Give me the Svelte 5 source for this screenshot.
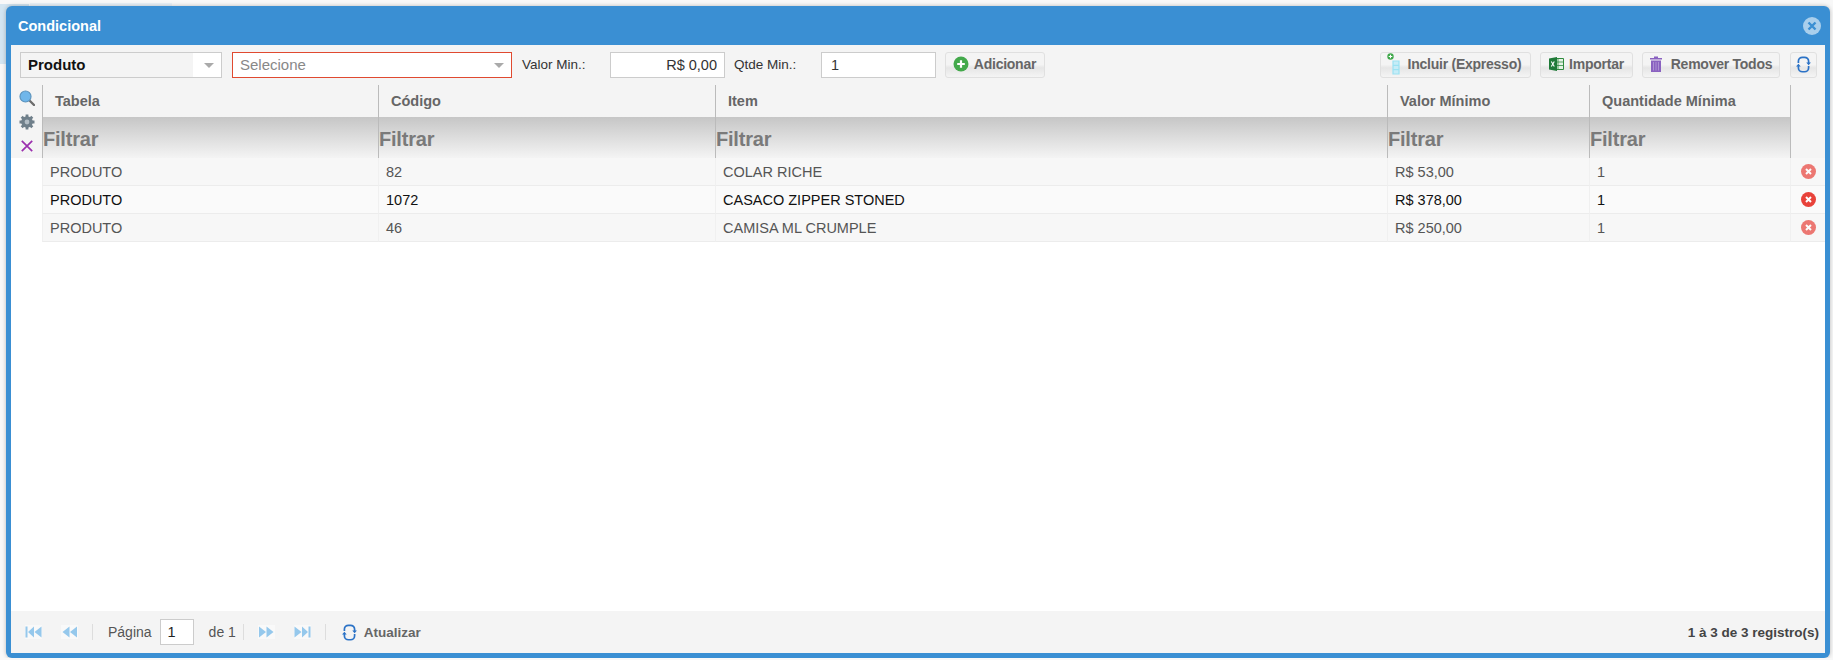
<script lang="ts">
  const rows = [
    { tabela: 'PRODUTO', codigo: '82', item: 'COLAR RICHE', valor: 'R$ 53,00', qtde: '1' },
    { tabela: 'PRODUTO', codigo: '1072', item: 'CASACO ZIPPER STONED', valor: 'R$ 378,00', qtde: '1', hover: true },
    { tabela: 'PRODUTO', codigo: '46', item: 'CAMISA ML CRUMPLE', valor: 'R$ 250,00', qtde: '1' },
  ];
  const columns = ['Tabela', 'Código', 'Item', 'Valor Mínimo', 'Quantidade Mínima'];
</script>

{#snippet refresh(size)}
  <svg width={size} height={size} viewBox="0 0 16 16" fill="none" stroke="#2b72c6" stroke-width="1.6">
    <path d="M3.2 6.500V5A3.800 3.800 0 0 1 7 1.200H9A3.800 3.800 0 0 1 12.800 5V6.500" />
    <path d="M12.800 9.500V11A3.800 3.800 0 0 1 9 14.800H7A3.800 3.800 0 0 1 3.200 11V9.500" />
    <path d="M10.600 6.200H15L12.800 8.600Z M1 9.800H5.400L3.200 7.400Z" fill="#2b72c6" stroke="none" />
  </svg>
{/snippet}

<div class="window">
  <header class="title">
    <span>Condicional</span>
    <svg class="close" width="18" height="18" viewBox="0 0 18 18">
      <circle cx="9" cy="9" r="9" fill="#a9cfec" />
      <path d="M5.5 5.5L12.5 12.5M12.5 5.5L5.5 12.5" stroke="#3a8fd3" stroke-width="2.4" />
    </svg>
  </header>

  <div class="content">
    <div class="toolbar">
      <div class="select first">
        <span class="value">Produto</span>
        <span class="arrow"></span>
      </div>
      <div class="select second">
        <span class="placeholder">Selecione</span>
        <span class="arrow"></span>
      </div>
      <span class="label valor">Valor Min.:</span>
      <input class="field money" value="R$ 0,00" />
      <span class="label qtde">Qtde Min.:</span>
      <input class="field" value="1" />
      <button class="btn add" type="button">
        <svg width="16" height="16" viewBox="0 0 16 16">
          <circle cx="8" cy="8" r="7.5" fill="#43a94b" />
          <path d="M8 4.2V11.8M4.2 8H11.8" stroke="#fff" stroke-width="2.2" />
        </svg>
        Adicionar
      </button>
      <div class="spacer"></div>
      <button class="btn express" type="button">
        <svg width="13" height="22" viewBox="0 0 13 22">
          <path d="M6 8H12V21H6Z M6 12.3H12 M6 16.6H12" fill="#c6ecf7" stroke="#9be2f2" stroke-width="1.2" />
          <circle cx="3.500" cy="3.500" r="3.200" fill="#3fa84a" />
          <path d="M1.700 3.500H5.300M3.500 1.700V5.300" stroke="#fff" stroke-width="1.100" />
        </svg>
        Incluir (Expresso)
      </button>
      <button class="btn import" type="button">
        <svg width="15" height="14" viewBox="0 0 15 14">
          <path d="M6 1.5H14.5V12.5H6Z" fill="#e4f2e4" stroke="#2f8a3d" />
          <path d="M9 2V12M6 5H14.500M6 8.500H14.500" stroke="#2f8a3d" stroke-width="0.8" />
          <path d="M0 1.500L8 0V14L0 12.500Z" fill="#1f7a38" />
          <path d="M2.300 4.500L5.300 9.500M5.300 4.500L2.300 9.500" stroke="#fff" stroke-width="1.100" />
        </svg>
        Importar
      </button>
      <button class="btn remove" type="button">
        <svg width="12" height="16" viewBox="0 0 12 16">
          <path d="M4 0.500H8V2H12V3.500H0V2H4Z" fill="#8a62c0" />
          <path d="M1 4.500H11V16H1Z" fill="#8a62c0" />
          <path d="M3.500 6V14.500M6 6V14.500M8.500 6V14.500" stroke="#b59ad8" stroke-width="0.800" />
        </svg>
        Remover Todos
      </button>
      <button class="btn reload" type="button">{@render refresh(17)}</button>
    </div>

    <div class="main">
      <div class="side">
        <svg width="16" height="16" viewBox="0 0 16 16">
          <path d="M10 10L15 15" stroke="#6d6d6d" stroke-width="2.400" stroke-linecap="round" />
          <circle cx="6.500" cy="6.500" r="5.500" fill="#6fb6ea" stroke="#5d94bd" stroke-width="1.200" />
        </svg>
        <svg class="gear" width="16" height="16" viewBox="0 0 16 16">
          <path d="M8 0.500V15.500M0.500 8H15.500M2.700 2.700L13.300 13.300M13.300 2.700L2.700 13.300" stroke="#6f7f8a" stroke-width="2.800" />
          <circle cx="8" cy="8" r="5.800" fill="#6f7f8a" />
          <circle cx="8" cy="8" r="2.400" fill="#b3bec6" />
        </svg>
        <svg class="clear" width="12" height="12" viewBox="0 0 12 12">
          <path d="M0.800 0.800L11.200 11.200M11.200 0.800L0.800 11.200" stroke="#9b2fae" stroke-width="1.700" />
        </svg>
      </div>

      <table class="grid">
        <colgroup>
          <col class="c1" /><col class="c2" /><col class="c3" /><col class="c4" /><col class="c5" /><col class="c6" />
        </colgroup>
        <thead>
          <tr class="heads">
            {#each columns as c}<th>{c}</th>{/each}
            <th></th>
          </tr>
          <tr class="filters">
            {#each columns as c}<td>Filtrar</td>{/each}
            <td class="blank"></td>
          </tr>
        </thead>
        <tbody>
          {#each rows as r}
            <tr class:hover={r.hover}>
              <td>{r.tabela}</td>
              <td>{r.codigo}</td>
              <td>{r.item}</td>
              <td>{r.valor}</td>
              <td>{r.qtde}</td>
              <td class="del">
                <svg width="15" height="15" viewBox="0 0 15 15">
                  <circle cx="7.500" cy="7.500" r="7.500" fill="#e8423a" />
                  <path d="M5 5L10 10M10 5L5 10" stroke="#fff" stroke-width="2" />
                </svg>
              </td>
            </tr>
          {/each}
        </tbody>
      </table>
    </div>

    <footer class="pager">
      <div class="nav">
        <svg width="17" height="14" viewBox="0 0 17 14"><path d="M0.500 1.500H2.500V12.500H0.500Z M9 1.500V12.500L3 7Z M16.500 1.500V12.500L9.500 7Z" fill="#95c8ec" /></svg>
      </div>
      <div class="nav prev">
        <svg width="17" height="14" viewBox="0 0 17 14"><path d="M8.500 1.500V12.500L1.500 7Z M16 1.500V12.500L9 7Z" fill="#95c8ec" /></svg>
      </div>
      <span class="sep one"></span>
      <span class="page-label">Página</span>
      <input class="page-input" value="1" />
      <span class="page-of">de 1</span>
      <span class="sep two"></span>
      <div class="nav next">
        <svg width="17" height="14" viewBox="0 0 17 14"><path d="M1 1.500V12.500L8 7Z M8.500 1.500V12.500L15.500 7Z" fill="#95c8ec" /></svg>
      </div>
      <div class="nav last">
        <svg width="17" height="14" viewBox="0 0 17 14"><path d="M0.500 1.500V12.500L7.500 7Z M8 1.500V12.500L14 7Z M14.500 1.500H16.500V12.500H14.500Z" fill="#95c8ec" /></svg>
      </div>
      <span class="sep three"></span>
      <span class="update">{@render refresh(17)}<b>Atualizar</b></span>
      <div class="spacer"></div>
      <span class="summary">1 à 3 de 3 registro(s)</span>
    </footer>
  </div>
</div>

<style>
  :global(body) {
    margin: 0;
    background:
      linear-gradient(#d3e5f1, #d3e5f1) 0 4px / 29px 60px no-repeat,
      linear-gradient(#eaf2f8, #eaf2f8) 30px 3px / 142px 10px no-repeat,
      #f8f8f8;
    overflow: hidden;
  }

  .window {
    box-sizing: border-box;
    width: 1824px;
    height: 652px;
    margin: 6px 0 0 6px;
    padding: 0 5px 5px;
    background: #3a8fd3;
    border-radius: 6px;
    box-shadow: 0 0 4px rgba(0, 0, 0, 0.25);
    display: flex;
    flex-direction: column;
    font-family: "Liberation Sans", Arial, sans-serif;
    font-size: 14px;
  }

  .title {
    height: 39px;
    flex: none;
    display: flex;
    align-items: center;
    justify-content: space-between;
    padding: 0 4px 0 7px;
    color: #fff;
    font-weight: bold;
    font-size: 14.500px;
  }

  .close {
    margin-top: 1px;
  }

  .content {
    flex: 1;
    min-height: 0;
    background: #fff;
    display: flex;
    flex-direction: column;
  }

  .toolbar {
    box-sizing: border-box;
    height: 40px;
    flex: none;
    padding: 7px 8px 0 9px;
    background: #f4f4f4;
    display: flex;
    align-items: flex-start;
  }

  .spacer {
    flex: 1;
  }

  .select {
    box-sizing: border-box;
    height: 26px;
    display: flex;
    align-items: center;
    background: #fff;
    border: 1px solid #ccc;
    font-size: 15px;
  }

  .select.first {
    width: 202px;
  }

  .select.first .value {
    flex: 1;
    align-self: stretch;
    line-height: 24px;
    padding-left: 7px;
    font-weight: bold;
    color: #111;
    background: #f4f4f4;
  }

  .select.first .arrow {
    margin: 0 7px 0 11px;
  }

  .select.second {
    width: 280px;
    margin-left: 10px;
    padding-left: 7px;
    border-color: #e04a30;
  }

  .placeholder {
    flex: 1;
    color: #888;
    padding-bottom: 1px;
  }

  .select.second .arrow {
    margin-right: 7px;
  }

  .arrow {
    width: 0;
    height: 0;
    border-left: 5px solid transparent;
    border-right: 5px solid transparent;
    border-top: 5px solid #aaa;
  }

  .label {
    font-size: 13.500px;
    line-height: 26px;
    color: #333;
  }

  .label.valor {
    width: 88px;
    margin-left: 10px;
  }

  .label.qtde {
    width: 87px;
    margin-left: 9px;
  }

  .field {
    box-sizing: border-box;
    width: 115px;
    height: 26px;
    border: 1px solid #ccc;
    padding: 0 9px;
    font: 14.500px "Liberation Sans", Arial, sans-serif;
    color: #333;
    background: #fff;
    outline: none;
  }

  .field.money {
    text-align: right;
    padding-right: 7px;
  }

  .btn {
    box-sizing: border-box;
    height: 26px;
    padding: 0 0 2px;
    display: flex;
    align-items: center;
    justify-content: center;
    gap: 6px;
    border: 1px solid #e0e0e0;
    border-radius: 3px;
    background: linear-gradient(#f4f4f4 0, #f4f4f4 48%, #e6e6e6 62%, #f4f4f4 100%);
    color: #666;
    font: bold 14px "Liberation Sans", Arial, sans-serif;
    letter-spacing: -0.25px;
  }

  .btn.add {
    width: 100px;
    margin-left: 9px;
    gap: 5px;
    padding-right: 1px;
  }

  .btn.express {
    width: 151px;
    gap: 8px;
    padding-right: 3px;
  }

  .btn.import {
    width: 93px;
    margin-left: 9px;
    gap: 5px;
  }

  .btn.remove {
    width: 138px;
    margin-left: 9px;
    gap: 9px;
  }

  .btn.reload {
    width: 27px;
    margin-left: 10px;
  }

  .main {
    flex: 1;
    min-height: 0;
    display: flex;
    align-items: flex-start;
  }

  .side {
    box-sizing: border-box;
    width: 31px;
    height: 73px;
    flex: none;
    padding: 5px 0 0 8px;
    background: #f4f4f4;
    display: flex;
    flex-direction: column;
    align-items: flex-start;
  }

  .gear {
    margin-top: 8px;
  }

  .clear {
    margin: 10px 0 0 2px;
  }

  .grid {
    width: 1783px;
    table-layout: fixed;
    border-collapse: separate;
    border-spacing: 0;
  }

  .c1 { width: 336px; }
  .c2 { width: 337px; }
  .c3 { width: 672px; }
  .c4 { width: 202px; }
  .c5 { width: 201px; }
  .c6 { width: 35px; }

  .heads th {
    box-sizing: border-box;
    height: 32px;
    padding: 0 0 0 12px;
    text-align: left;
    font-size: 14.500px;
    font-weight: bold;
    color: #666;
    background: #f4f4f4;
    border-left: 1px solid #bbb;
  }

  .filters td {
    box-sizing: border-box;
    height: 41px;
    padding: 3px 0 0 0;
    font-size: 20px;
    letter-spacing: -0.2px;
    font-weight: bold;
    color: #7a7a7a;
    background: linear-gradient(#c6c6c6, #f4f4f4);
    border-left: 1px solid #bbb;
  }

  .heads th:last-child {
    padding: 0;
  }

  .filters td.blank {
    background: #f4f4f4;
  }

  tbody td {
    box-sizing: border-box;
    height: 28px;
    padding: 0 0 0 7px;
    background: #f7f7f7;
    color: #555;
    font-size: 14.500px;
    border-left: 1px solid #f0f0f0;
    border-bottom: 1px solid #ececec;
  }

  tbody tr.hover td {
    background: #fafafa;
    color: #111;
  }

  tbody td.del {
    padding: 0 0 0 10px;
    line-height: 0;
  }

  .del svg {
    opacity: 0.7;
  }

  .hover .del svg {
    opacity: 1;
  }

  .pager {
    box-sizing: border-box;
    height: 42px;
    flex: none;
    padding: 0 6px 0 14px;
    background: #f4f4f4;
    display: flex;
    align-items: center;
    color: #555;
    font-size: 14px;
  }

  .nav {
    width: 17px;
    height: 14px;
    background: #f9f9f9;
    line-height: 0;
  }

  .nav.prev {
    margin-left: 19px;
  }

  .sep {
    width: 1px;
    height: 16px;
    background: #ddd;
  }

  .sep.one {
    margin-left: 14px;
  }

  .page-label {
    margin-left: 15px;
  }

  .page-input {
    box-sizing: border-box;
    width: 34px;
    height: 26px;
    margin-left: 8px;
    padding: 0 0 0 7px;
    border: 1px solid #ccc;
    font: 14.500px "Liberation Sans", Arial, sans-serif;
    color: #222;
    background: #fff;
    outline: none;
  }

  .page-of {
    margin-left: 15px;
  }

  .sep.two {
    margin-left: 7px;
  }

  .nav.next {
    margin-left: 14px;
  }

  .nav.last {
    margin-left: 19px;
  }

  .sep.three {
    margin-left: 14px;
  }

  .update {
    margin-left: 15px;
    display: flex;
    align-items: center;
    gap: 6px;
  }

  .update b {
    font-size: 13.500px;
    color: #666;
  }

  .summary {
    font-weight: bold;
    font-size: 13.500px;
    color: #444;
  }
</style>
